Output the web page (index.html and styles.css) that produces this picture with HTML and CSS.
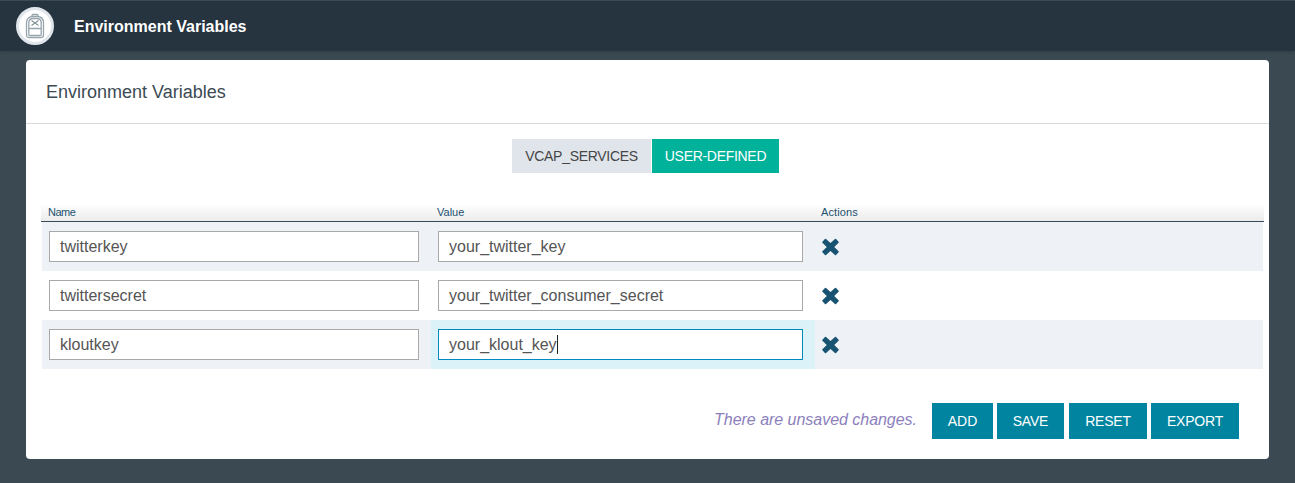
FILE: index.html
```html
<!DOCTYPE html>
<html lang="en">
<head>
<meta charset="utf-8">
<title>Environment Variables</title>
<link rel="stylesheet" href="styles.css">
</head>
<body>
<svg width="0" height="0" class="defs">
  <symbol id="remove" viewBox="0 0 18 18"><path d="M4.500 1.600L9.500 6.200L14.500 1.600L17 4.200L12.200 9L17 13.800L14.500 16.400L9.500 11.800L4.500 16.400L2 13.800L6.800 9L2 4.200Z" fill="#185372" stroke="#185372" stroke-width="1.600" stroke-linejoin="round"/></symbol>
</svg>
<header class="topbar">
  <div class="avatar">
    <svg width="20" height="26" viewBox="0 0 20 26" fill="none" stroke="#96a4ac" stroke-width="1.300">
      <path d="M7 3.500V2.500Q7 1.500 8 1.500H12Q13 1.500 13 2.500V3.500"/>
      <path d="M1.500 22V10Q1.500 3.500 8 3.500H12Q18.500 3.500 18.500 10V22Q18.500 24.500 16 24.500H4Q1.500 24.500 1.500 22Z"/>
      <path d="M3.800 14.500V10Q3.800 5.500 8 5.500H12Q16.200 5.500 16.200 10V21.500Q16.200 22.500 15 22.500H5Q3.800 22.500 3.800 21.500V14.500M3.800 15.500H16.200"/>
      <path d="M6.500 7.500L13.500 12.500M13.500 7.500L6.500 12.500" stroke="#84949c"/>
    </svg>
  </div>
  <h1 class="topbar-title">Environment Variables</h1>
</header>
<main class="card">
  <h2 class="card-title">Environment Variables</h2>
  <nav class="tabs">
    <span class="tab tab-services">VCAP_SERVICES</span>
    <span class="tab tab-active">USER-DEFINED</span>
  </nav>
  <section class="table">
    <div class="row head"><div class="name">Name</div><div class="value">Value</div><div class="actions">Actions</div></div>
    <div class="row shaded">
      <div class="name"><div class="field">twitterkey</div></div>
      <div class="value"><div class="field">your_twitter_key</div></div>
      <div class="actions"><svg class="icon"><use href="#remove"/></svg></div>
    </div>
    <div class="row">
      <div class="name"><div class="field">twittersecret</div></div>
      <div class="value"><div class="field">your_twitter_consumer_secret</div></div>
      <div class="actions"><svg class="icon"><use href="#remove"/></svg></div>
    </div>
    <div class="row shaded">
      <div class="name"><div class="field">kloutkey</div></div>
      <div class="value editing"><div class="field">your_klout_key<i class="caret"></i></div></div>
      <div class="actions"><svg class="icon"><use href="#remove"/></svg></div>
    </div>
  </section>
  <footer class="footer">
    <em class="notice">There are unsaved changes.</em>
    <span class="button add">ADD</span>
    <span class="button save">SAVE</span>
    <span class="button reset">RESET</span>
    <span class="button export">EXPORT</span>
  </footer>
</main>
</body>
</html>
```
FILE: styles.css
```css
* { box-sizing: border-box; }
html { height: 100%; background: #3b4a52; }
body { margin: 0; height: 483px; overflow: hidden; font-family: "Liberation Sans", Arial, sans-serif; color: #464646; }
.defs { display: block; width: 0; height: 0; }
.topbar { display: flex; align-items: center; height: 51px; padding-left: 16px; background: #26343f; border-top: 1px solid #3b4b54; box-shadow: 0 1px 5px rgba(30, 40, 46, .4); }
.avatar { display: flex; align-items: center; justify-content: center; width: 38px; height: 38px; border: 3px solid #dfe5eb; border-radius: 50%; background: #fff; }
.topbar-title { margin: 1px 0 0 20px; font-size: 16px; line-height: 20px; color: #fff; }
.card { width: 1243px; height: 399px; margin: 9px 0 0 26px; background: #fff; border-radius: 4px; }
.card-title { height: 64px; margin: 0; padding-left: 20px; border-bottom: 1px solid #d8dadc; font-size: 18px; font-weight: 400; line-height: 64px; color: #3b4a54; }
.tabs { display: flex; gap: 1px; padding: 15px 0 0 486px; }
.tab { height: 34px; font-size: 14px; line-height: 35px; letter-spacing: -.3px; text-align: center; }
.tab-services { width: 139px; background: #dfe5eb; }
.tab-active { width: 127px; background: #00b299; color: #fff; }
.table { width: 1223px; margin: 31px 0 0 15px; }
.row { display: flex; height: 49px; margin: 0 1px; }
.name { width: 389px; padding: 9px 12px 9px 7px; }
.value { width: 384px; padding: 9px 12px 9px 7px; }
.actions { padding: 16px 0 0 6px; }
.head { height: 18px; margin: 0; background: linear-gradient(#fff, #ebebeb); border-bottom: 1px solid #3b4a59; font-size: 11px; line-height: 17px; color: #1d5270; }
.head > div { padding-top: 0; padding-bottom: 0; }
.head .name { letter-spacing: -.5px; }
.head .actions { padding-left: 7px; letter-spacing: .1px; }
.shaded { background: #eef1f6; }
.field { height: 31px; padding-left: 10px; border: 1px solid #a9a9a9; background: #fff; font-size: 16px; line-height: 29px; color: #555; white-space: nowrap; }
.editing { background: #dcf2f9; }
.editing .field { display: flex; align-items: center; border-color: #008abf; }
.caret { width: 1px; height: 19px; background: #222; }
.icon { display: block; width: 18px; height: 18px; }
.footer { display: flex; padding: 34px 30px 0 0; justify-content: flex-end; }
.notice { margin-right: 15px; font-size: 16px; line-height: 33px; letter-spacing: -.03px; color: #8c7fbc; }
.button { height: 36px; font-size: 14px; line-height: 37px; letter-spacing: -.2px; text-align: center; background: #00849f; color: #fff; }
.add { width: 61px; margin-right: 4px; letter-spacing: 0; }
.save { width: 67px; margin-right: 5px; }
.reset { width: 78px; margin-right: 4px; }
.export { width: 88px; }
```
